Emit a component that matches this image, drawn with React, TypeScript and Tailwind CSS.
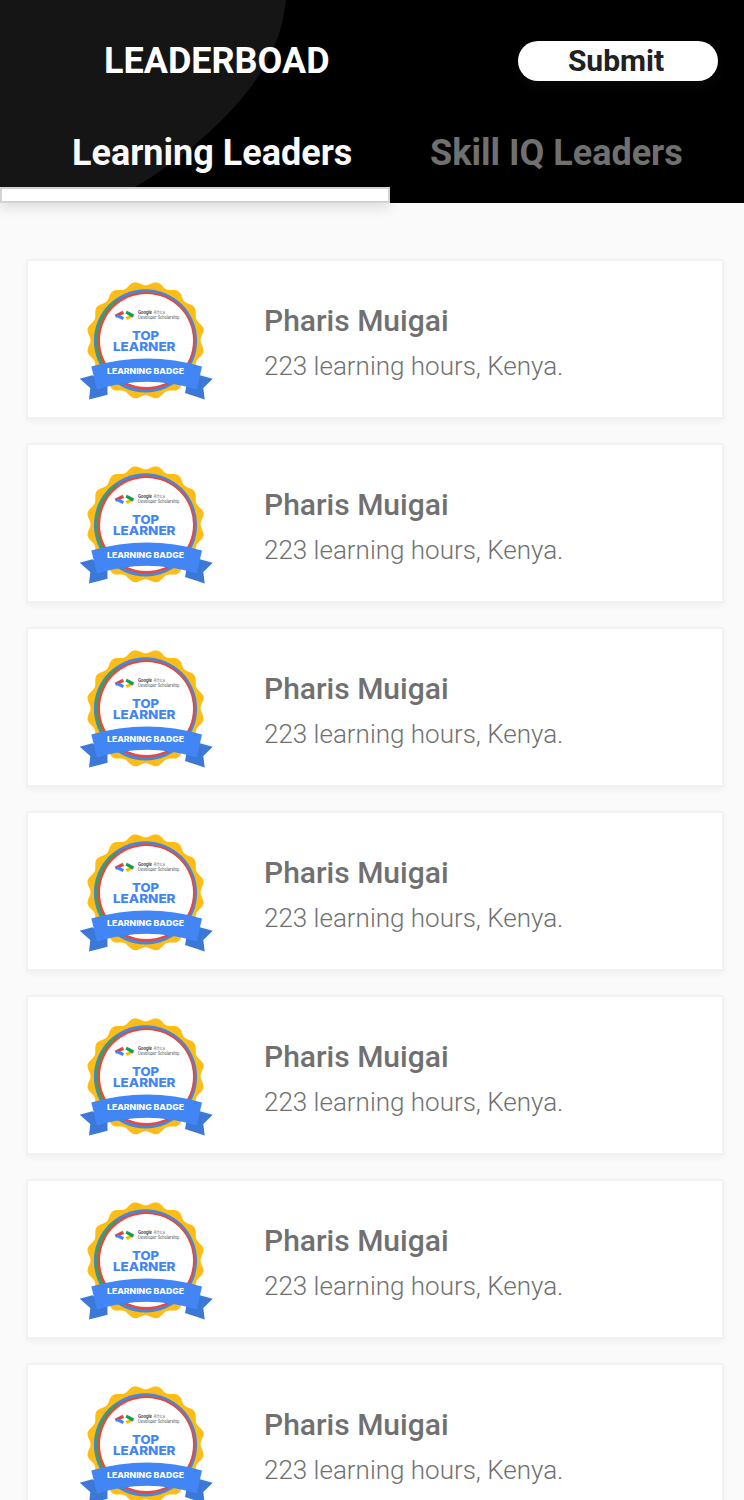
const leaders = Array.from({ length: 7 }, (_, id) => ({
  id,
  name: "Pharis Muigai",
  detail: "223 learning hours, Kenya.",
}));

function sealPath() {
  const points: string[] = [];
  for (let i = 0; i <= 360; i += 1) {
    const a = (i * Math.PI) / 180;
    const r = 57 - 2 * Math.cos(16 * a);
    points.push(`${(75.5 + r * Math.cos(a)).toFixed(2)} ${(70.3 + r * Math.sin(a)).toFixed(2)}`);
  }
  return `M${points.join("L")}Z`;
}

const seal = sealPath();

function Badge() {
  return (
    <svg viewBox="0 0 150 140" className="h-[140px] w-[150px] shrink-0" fontFamily="Inter, 'Open Sans', sans-serif">
      <path d={seal} fill="#fdbd16" />
      <circle cx="75.5" cy="70.8" r="51.6" fill="#4a86d8" />
      <path d="M46 29.5A51.2 51.2 0 0 0 46 112.5L50 107A46 46 0 0 1 50 35Z" fill="#34a165" />
      <circle cx="76.2" cy="70.7" r="48.7" fill="#e8493a" />
      <circle cx="76.5" cy="70.5" r="46.5" fill="#fff" />
      <g fill="none" strokeWidth="3.2">
        <path d="M45.4 46.2L53.4 42.2" stroke="#ea4335" />
        <path d="M46.5 45.2L53.4 48.6" stroke="#4285f4" />
        <path d="M56.2 48.6L63.3 45" stroke="#fbbc05" />
        <path d="M56.2 42.2L63.3 46" stroke="#109d58" />
      </g>
      <text x="68" y="44.2" fontSize="4.3" fill="#444" textLength="14" lengthAdjust="spacingAndGlyphs" fontWeight="700">Google</text>
      <text x="83.5" y="44.2" fontSize="4.3" fill="#777" textLength="11.5" lengthAdjust="spacingAndGlyphs">Africa</text>
      <text x="68" y="49.3" fontSize="4.3" fill="#444" textLength="41" lengthAdjust="spacingAndGlyphs">Developer Scholarship</text>
      <g fill="#4285f4" fontWeight="800" fontSize="12">
        <text x="62" y="69.6" textLength="27" lengthAdjust="spacingAndGlyphs">TOP</text>
        <text x="43" y="81.4" textLength="62.5" lengthAdjust="spacingAndGlyphs">LEARNER</text>
      </g>
      <path d="M9.7 108.7L22.3 105.3L37.5 115V124.8L19 129.5L20.3 118Z" fill="#3c78d8" />
      <path d="M142.7 108.7L130 105.3L116.5 115L115 123L134.7 129.5L133.3 118Z" fill="#3c78d8" />
      <path d="M21.3 96.5Q77 80.5 132 96.5L126.7 119.5Q77 104 27 119.5Z" fill="#4285f4" />
      <text x="37" y="104.4" fill="#fff" fontWeight="800" fontSize="7.9" textLength="77" lengthAdjust="spacingAndGlyphs">LEARNING BADGE</text>
    </svg>
  );
}

export default function App() {
  return (
    <div className="h-[1500px] w-full overflow-hidden bg-[#fafafa] font-[Roboto,sans-serif]">
      <header className="relative flex h-[203px] flex-col bg-black">
        <svg className="absolute top-0 left-0 h-[187px] w-[300px]" viewBox="0 0 300 187">
          <path d="M0 0H286C281 46 261 80 223 119C198 143 170 167 135 187H0Z" fill="#151515" />
        </svg>
        <div className="relative flex h-[121px] items-center justify-between pr-[26px] pl-[104px]">
          <h1 className="text-[36px] leading-[42px] font-bold text-white">LEADERBOAD</h1>
          <button className="h-10 w-[200px] rounded-full bg-white pr-1 text-[30px] leading-10 font-bold text-[#202124] shadow-[0_6px_12px_rgba(255,255,255,0.03)]">
            Submit
          </button>
        </div>
        <nav className="relative flex h-[66px] items-start pt-[11px] pl-[72px] text-[36px] leading-[42px] font-bold">
          <button className="w-[358px] text-left text-[#fafafa]">Learning Leaders</button>
          <button className="text-left text-[#707070]">Skill IQ Leaders</button>
        </nav>
        <div className="relative h-4 w-[390px] border-2 border-[#d3d3d3] bg-white shadow-[0_6px_12px_rgba(0,0,0,0.1)]" />
      </header>
      <main className="flex flex-col gap-6 pt-14 pr-5 pl-[26px]">
        {leaders.map((l) => (
          <article key={l.id} className="flex h-40 shrink-0 items-start border-2 border-[#f2f2f2] bg-white pt-[9px] pl-[42px] shadow-[0_3px_6px_rgba(0,0,0,0.04)]">
            <Badge />
            <div className="pt-[33px] pl-11 text-[#707070]">
              <h2 className="text-[30px] leading-[36px] font-medium">{l.name}</h2>
              <p className="pt-[11px] text-[26px] leading-[32px] font-light">{l.detail}</p>
            </div>
          </article>
        ))}
      </main>
    </div>
  );
}
